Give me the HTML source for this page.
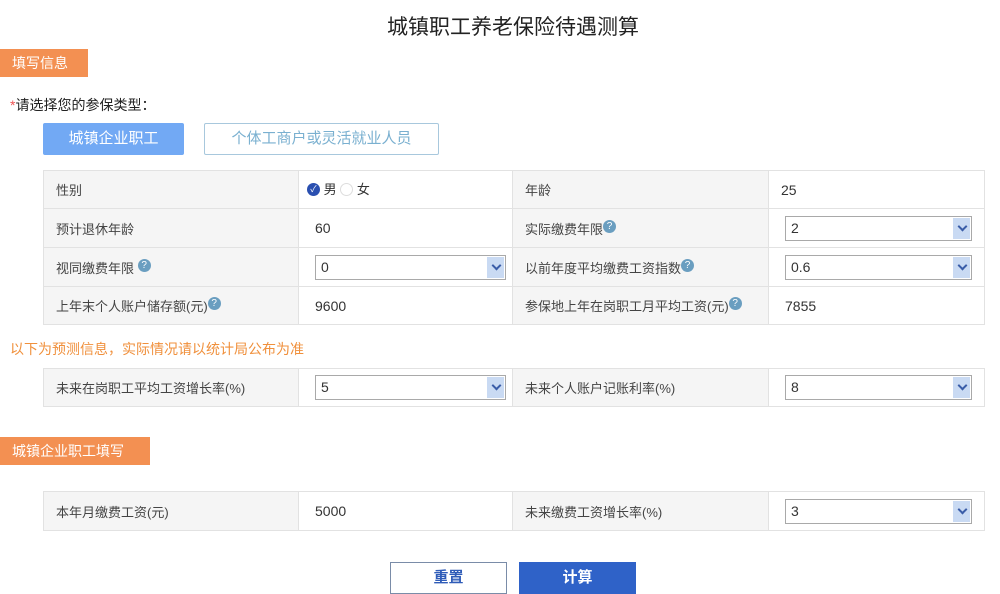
<!DOCTYPE html>
<html><head><meta charset="utf-8"><style>
*{margin:0;padding:0;box-sizing:border-box}
body{width:1000px;height:589px;background:#fff;font-family:"Liberation Sans","Noto Sans CJK SC",sans-serif;position:relative;overflow:hidden;color:#333}
.a{position:absolute}
.title{left:0;width:1026px;text-align:center;top:11px;font-size:21px;color:#222}
.tag{background:#f39052;color:#fff;font-size:14px;line-height:28px;padding-left:12px}
table{position:absolute;left:43px;width:942px;border-collapse:collapse;font-size:13px}
td{border:1px solid #e2e2e2;padding:0 12px;height:38px;vertical-align:middle}
td.l{background:#f5f5f5;color:#444}
.sel{position:relative;height:25px;border:1px solid #a9a9a9;font-size:14px;line-height:23px;padding-left:5px;color:#333;background:#fff}
.sel:after{content:"";position:absolute;right:1px;top:1px;width:17px;height:21px;background:#c9daf3}
.sel i{position:absolute;right:5px;top:6px;width:7px;height:7px;border-right:2px solid #3a5da8;border-bottom:2px solid #3a5da8;transform:rotate(45deg);z-index:1}
.q{display:inline-block;width:13px;height:13px;border-radius:50%;background:#6a9ec0;color:#fff;font-size:10px;line-height:13px;text-align:center;vertical-align:top;margin-top:1px}
.btn{font-size:15px;text-align:center;line-height:32px}
.r{display:inline-block;width:13px;height:13px;border-radius:50%;vertical-align:top;margin-top:2px}
</style></head><body>
<div class="a title">城镇职工养老保险待遇测算</div>
<div class="a tag" style="left:0;top:49px;width:88px">填写信息</div>
<div class="a" style="left:10px;top:95px;font-size:14px;color:#222"><span style="color:#e55">*</span>请选择您的参保类型：</div>
<div class="a btn" style="left:43px;top:123px;width:141px;height:32px;background:#72a9f4;color:#fff;border-radius:2px">城镇企业职工</div>
<div class="a btn" style="left:204px;top:123px;width:235px;height:32px;border:1px solid #a8c8dd;color:#7ab0d0;line-height:30px;border-radius:2px">个体工商户或灵活就业人员</div>
<table style="top:170px">
<col style="width:255px"><col style="width:214px"><col style="width:256px"><col>
<tr><td class="l" style="height:37px">性别</td><td style="padding-left:8px;line-height:17px"><span class="r" style="background:#2a4fb0;color:#fff;font-size:9px;text-align:center;line-height:13px">✓</span> 男 <span class="r" style="border:1px solid #ddd"></span> 女</td><td class="l">年龄</td><td style="font-size:14px">25</td></tr>
<tr><td class="l" style="height:39px">预计退休年龄</td><td style="font-size:14px;padding-left:16px">60</td><td class="l">实际缴费年限<span class="q">?</span></td><td style="padding-left:16px"><div class="sel">2<i></i></div></td></tr>
<tr><td class="l" style="height:39px">视同缴费年限 <span class="q">?</span></td><td style="padding-left:16px;padding-right:6px"><div class="sel">0<i></i></div></td><td class="l">以前年度平均缴费工资指数<span class="q">?</span></td><td style="padding-left:16px"><div class="sel">0.6<i></i></div></td></tr>
<tr><td class="l" style="height:36px">上年末个人账户储存额(元)<span class="q">?</span></td><td style="font-size:14px;padding-left:16px">9600</td><td class="l">参保地上年在岗职工月平均工资(元)<span class="q">?</span></td><td style="font-size:14px;padding-left:16px">7855</td></tr>
</table>
<div class="a" style="left:10px;top:339px;font-size:14px;color:#f0903c">以下为预测信息，实际情况请以统计局公布为准</div>
<table style="top:368px">
<col style="width:255px"><col style="width:214px"><col style="width:256px"><col>
<tr><td class="l">未来在岗职工平均工资增长率(%)</td><td style="padding-left:16px;padding-right:6px"><div class="sel">5<i></i></div></td><td class="l">未来个人账户记账利率(%)</td><td style="padding-left:16px"><div class="sel">8<i></i></div></td></tr>
</table>
<div class="a tag" style="left:0;top:437px;width:150px">城镇企业职工填写</div>
<table style="top:491px">
<col style="width:255px"><col style="width:214px"><col style="width:256px"><col>
<tr><td class="l" style="height:39px">本年月缴费工资(元)</td><td style="font-size:14px;padding-left:16px">5000</td><td class="l">未来缴费工资增长率(%)</td><td style="padding-left:16px"><div class="sel">3<i></i></div></td></tr>
</table>
<div class="a btn" style="left:390px;top:562px;width:117px;height:32px;border:1px solid #7a8ca8;color:#2f5cb8;line-height:30px;font-weight:bold">重置</div>
<div class="a btn" style="left:519px;top:562px;width:117px;height:32px;background:#2f62c8;color:#fff;font-weight:bold">计算</div>
</body></html>
